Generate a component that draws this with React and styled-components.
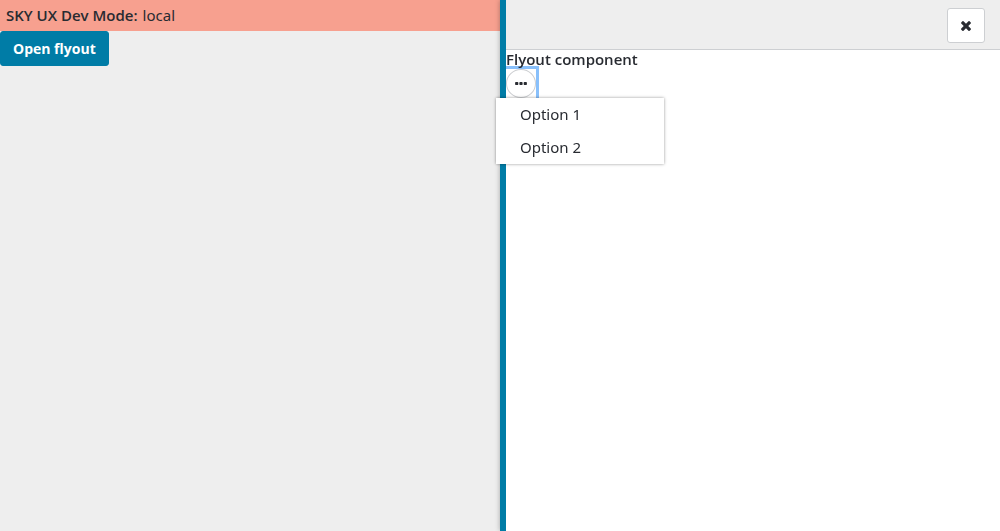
import React from "react";
import styled, { createGlobalStyle } from "styled-components";

const GlobalStyle = createGlobalStyle`
  * { box-sizing: border-box; }
  body {
    margin: 0;
    background: #eeeeee;
    color: #282b31;
    font-family: "Noto Sans", "Open Sans", sans-serif;
    font-size: 15px;
    line-height: 20px;
  }
  button { font: inherit; color: inherit; cursor: pointer; }
  strong { font-family: "Open Sans", sans-serif; font-weight: 600; }
`;

const DevBar = styled.div`
  display: flex;
  gap: 5px;
  padding: 5px 6px 6px;
  background: #f7a08f;
`;

const PrimaryButton = styled.button`
  display: block;
  padding: 7px 12px 6px;
  border: 1px solid #007ca6;
  border-radius: 3px;
  background: #007ca6;
  && {
    color: #ffffff;
    font-family: "Open Sans", sans-serif;
    font-size: 14px;
    font-weight: 700;
  }
`;

const Flyout = styled.aside`
  position: fixed;
  top: 0;
  right: 0;
  bottom: 0;
  width: 50%;
  border-left: 6px solid #007ca6;
  background: #ffffff;
  box-shadow: 0 0 5px rgba(0, 0, 0, 0.3);
`;

const FlyoutHeader = styled.header`
  display: flex;
  justify-content: flex-end;
  padding: 8px 15px 6px;
  border-bottom: 1px solid #cdcfd2;
  background: #eeeeee;
`;

const CloseButton = styled.button`
  display: flex;
  align-items: center;
  justify-content: center;
  width: 38px;
  height: 35px;
  padding: 0;
  border: 1px solid #cdcfd2;
  border-radius: 3px;
  background: #ffffff;
`;

const FlyoutContent = styled.div`
  overflow: hidden;
  padding-bottom: 4px;
`;

const Title = styled.strong`
  position: relative;
  z-index: 1;
  display: block;
  line-height: 19px;
`;

const MenuButton = styled.button`
  display: flex;
  align-items: center;
  justify-content: center;
  width: 30px;
  height: 29px;
  padding: 0;
  border: 1px solid #cdcfd2;
  border-radius: 50%;
  background: #ffffff;
`;

const FocusFrame = styled.div`
  width: 30px;
  box-shadow: 0 0 0 3px #89c0fb;
`;

const Menu = styled.div`
  position: absolute;
  top: 98px;
  left: -10px;
  z-index: 2;
  width: 168px;
  background: #ffffff;
  box-shadow: 0 0 3px rgba(0, 0, 0, 0.4);
`;

const MenuItem = styled.button`
  display: block;
  width: 100%;
  padding: 6px 24px 7px;
  border: 0;
  background: transparent;
  text-align: left;
`;

const Icon = styled.svg`
  width: 15px;
  height: 15px;
  fill: currentColor;
`;

export default function App() {
  return (
    <>
      <GlobalStyle />
      <main>
        <DevBar>
          <strong>SKY UX Dev Mode:</strong>
          <span>local</span>
        </DevBar>
        <PrimaryButton type="button">Open flyout</PrimaryButton>
      </main>
      <Flyout aria-label="Flyout">
        <FlyoutHeader>
          <CloseButton type="button" aria-label="Close flyout">
            <Icon viewBox="60 0 1792 1792" aria-hidden="true">
              <path d="M1490 1322q0 40-28 68l-136 136q-28 28-68 28t-68-28l-294-294-294 294q-28 28-68 28t-68-28l-136-136q-28-28-28-68t28-68l294-294-294-294q-28-28-28-68t28-68l136-136q28-28 68-28t68 28l294 294 294-294q28-28 68-28t68 28l136 136q28 28 28 68t-28 68l-294 294 294 294q28 28 28 68z" />
            </Icon>
          </CloseButton>
        </FlyoutHeader>
        <FlyoutContent>
          <Title>Flyout component</Title>
          <FocusFrame>
            <MenuButton type="button" aria-label="Context menu" aria-haspopup="menu" aria-expanded="true">
              <Icon viewBox="60 0 1792 1792" aria-hidden="true">
                <path d="M576 800v192q0 40-28 68t-68 28h-192q-40 0-68-28t-28-68v-192q0-40 28-68t68-28h192q40 0 68 28t28 68zm512 0v192q0 40-28 68t-68 28h-192q-40 0-68-28t-28-68v-192q0-40 28-68t68-28h192q40 0 68 28t28 68zm512 0v192q0 40-28 68t-68 28h-192q-40 0-68-28t-28-68v-192q0-40 28-68t68-28h192q40 0 68 28t28 68z" />
              </Icon>
            </MenuButton>
          </FocusFrame>
        </FlyoutContent>
        <Menu role="menu">
          <MenuItem type="button" role="menuitem">Option 1</MenuItem>
          <MenuItem type="button" role="menuitem">Option 2</MenuItem>
        </Menu>
      </Flyout>
    </>
  );
}
